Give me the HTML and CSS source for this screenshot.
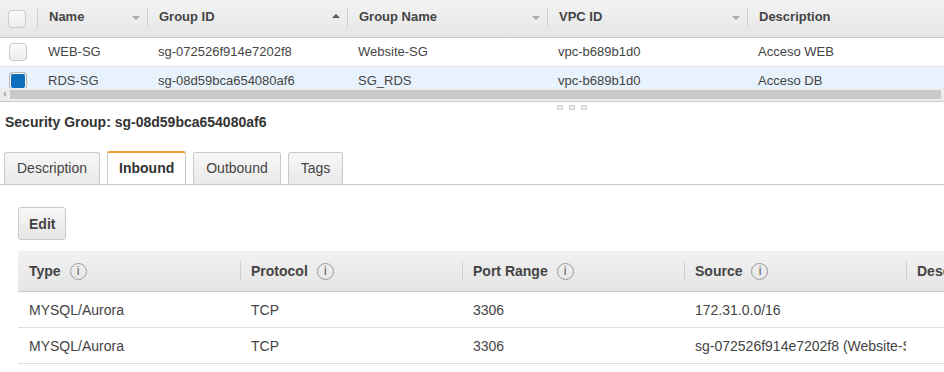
FILE: index.html
```html
<!DOCTYPE html>
<html lang="en">
<head>
    <meta charset="UTF-8">
    <title>Security Groups</title>
    <link rel="stylesheet" href="styles.css">
</head>
<body>
<div class="list-pane">
    <div class="list-body">
        <div class="grid-row grid-head">
            <div class="cell check-cell"><span class="check"></span></div>
            <div class="cell">Name<span class="sort down"></span></div>
            <div class="cell">Group ID<span class="sort up"></span></div>
            <div class="cell">Group Name<span class="sort down"></span></div>
            <div class="cell">VPC ID<span class="sort down"></span></div>
            <div class="cell last">Description</div>
        </div>
        <div class="grid-row">
            <div class="cell check-cell"><span class="check"></span></div>
            <div class="cell">WEB-SG</div>
            <div class="cell">sg-072526f914e7202f8</div>
            <div class="cell">Website-SG</div>
            <div class="cell">vpc-b689b1d0</div>
            <div class="cell last">Acceso WEB</div>
        </div>
        <div class="grid-row selected">
            <div class="cell check-cell"><span class="check on"></span></div>
            <div class="cell">RDS-SG</div>
            <div class="cell">sg-08d59bca654080af6</div>
            <div class="cell">SG_RDS</div>
            <div class="cell">vpc-b689b1d0</div>
            <div class="cell last">Acceso DB</div>
        </div>
        <div class="grid-row">
            <div class="cell check-cell"><span class="check"></span></div>
        </div>
    </div>
    <div class="hscroll">
        <span class="arrow-left"></span>
        <div class="thumb"></div>
    </div>
</div>
<div class="splitter"><span></span><span></span><span></span></div>

<div class="detail">
    <h2 class="detail-title">Security Group: sg-08d59bca654080af6</h2>
    <div class="tabs">
        <div class="tab">Description</div>
        <div class="tab active">Inbound</div>
        <div class="tab">Outbound</div>
        <div class="tab">Tags</div>
    </div>
    <div class="tab-panel">
        <button class="btn">Edit</button>
        <div class="rules">
            <div class="rule-row rule-head">
                <div class="rcell">Type <span class="info">i</span></div>
                <div class="rcell">Protocol <span class="info">i</span></div>
                <div class="rcell">Port Range <span class="info">i</span></div>
                <div class="rcell">Source <span class="info">i</span></div>
                <div class="rcell">Description <span class="info">i</span></div>
            </div>
            <div class="rule-row">
                <div class="rcell">MYSQL/Aurora</div>
                <div class="rcell">TCP</div>
                <div class="rcell">3306</div>
                <div class="rcell">172.31.0.0/16</div>
                <div class="rcell"></div>
            </div>
            <div class="rule-row">
                <div class="rcell">MYSQL/Aurora</div>
                <div class="rcell">TCP</div>
                <div class="rcell">3306</div>
                <div class="rcell">sg-072526f914e7202f8 (Website-SG)</div>
                <div class="rcell"></div>
            </div>
        </div>
    </div>
</div>
</body>
</html>
```

FILE: styles.css
```css
body {
    margin: 0;
    width: 944px;
    height: 372px;
    overflow: hidden;
    font-family: "Liberation Sans", Arial, sans-serif;
    color: #444;
    background-color: #fff;
}
.list-pane {
    border-bottom: 1px solid #ccc;
}
.list-body {
    height: 88px;
    overflow: hidden;
}
.grid-row {
    display: grid;
    grid-template-columns: 38px 110px 200px 200px 200px 1fr;
    height: 28px;
    border-bottom: 1px solid #e2e2e2;
    font-size: 13px;
    align-items: center;
}
.grid-row.selected {
    background-color: #e8f2fc;
}
.grid-head {
    height: 37px;
    background: linear-gradient(#f3f3f3, #e6e6e6);
    border-bottom: 1px solid #c9c9c9;
    font-weight: bold;
}
.cell {
    position: relative;
    padding-left: 10px;
    line-height: 18px;
    white-space: nowrap;
    overflow: hidden;
}
.grid-head .cell {
    height: 37px;
    line-height: 34px;
    padding-left: 11px;
}
.grid-head .cell::after {
    content: "";
    position: absolute;
    right: 0;
    top: 8px;
    height: 20px;
    border-right: 1px solid #d0d0d0;
}
.grid-head .cell.last::after {
    display: none;
}
.check-cell {
    padding-left: 8px;
}
.grid-head .check-cell {
    padding-left: 8px;
    display: flex;
    align-items: center;
}
.check {
    display: block;
    width: 16px;
    height: 16px;
    border: 1px solid #c9c9c9;
    border-radius: 4px;
    background: linear-gradient(#fafafa, #ececec);
}
.grid-row .check-cell .check {
    margin-left: 1px;
}
.grid-head .check-cell .check {
    margin-left: 0;
}
.check.on {
    background: #0a6ebd;
    box-shadow: inset 0 0 0 1px #fff;
    border-color: #b8b8b8;
}
.sort {
    position: absolute;
    right: 8px;
    top: 16px;
    width: 0;
    height: 0;
    border-left: 4px solid transparent;
    border-right: 4px solid transparent;
}
.sort.down {
    border-top: 4px solid #aaa;
}
.sort.up {
    top: 14px;
    border-bottom: 4px solid #555;
}
.hscroll {
    position: relative;
    height: 13px;
    background-color: #ececec;
    padding: 2px 3px 0 10px;
    box-sizing: border-box;
}
.thumb {
    height: 9px;
    background-color: #c9c9c9;
}
.arrow-left {
    position: absolute;
    left: 3px;
    top: 3px;
    border-top: 3px solid transparent;
    border-bottom: 3px solid transparent;
    border-right: 3px solid #b0b0b0;
}
.splitter {
    display: flex;
    justify-content: center;
    gap: 6px;
    padding: 3px 0 0 200px;
    height: 4px;
}
.splitter span {
    width: 4px;
    height: 3px;
    border: 1px solid #ccc;
    border-radius: 1px;
    background-color: #eee;
}
.detail-title {
    margin: 5px 0 0 5px;
    font-size: 14px;
    font-weight: bold;
    color: #333;
}
.tabs {
    display: flex;
    gap: 7px;
    margin-top: 22px;
    padding-left: 4px;
    border-bottom: 1px solid #c9c9c9;
    height: 32px;
}
.tab {
    padding: 0 12px;
    height: 31px;
    line-height: 31px;
    font-size: 14px;
    color: #444;
    border: 1px solid #c9c9c9;
    border-bottom: none;
    border-radius: 3px 3px 0 0;
    background: linear-gradient(#f7f7f7, #e9e9e9);
}
.tab.active {
    height: 31px;
    border-top: 2px solid #f79a2d;
    background: #fff;
    font-weight: bold;
    color: #333;
    line-height: 31px;
    margin-top: -1px;
    padding: 0 11px;
}
.tab-panel {
    padding: 22px 0 0 18px;
}
.btn {
    display: block;
    height: 33px;
    padding: 0 10px;
    font-family: "Liberation Sans", Arial, sans-serif;
    font-size: 14px;
    font-weight: bold;
    color: #444;
    border: 1px solid #c9c9c9;
    border-radius: 3px;
    background: linear-gradient(#f7f7f7, #e6e6e6);
}
.rules {
    margin-top: 11px;
    width: 1000px;
}
.rule-row {
    display: grid;
    grid-template-columns: 222px 222px 222px 222px 1fr;
    height: 35px;
    border-bottom: 1px solid #ddd;
    align-items: center;
    font-size: 14px;
}
.rule-head {
    height: 40px;
    background: linear-gradient(#f2f2f2, #e5e5e5);
    border-bottom: 1px solid #c9c9c9;
    font-weight: bold;
    color: #444;
}
.rcell {
    position: relative;
    padding-left: 11px;
    white-space: nowrap;
    overflow: hidden;
}
.rule-head .rcell {
    display: flex;
    align-items: center;
    gap: 9px;
    height: 40px;
}
.rule-head .rcell::before {
    content: "";
    position: absolute;
    left: 0;
    top: 10px;
    height: 19px;
    border-left: 1px solid #d0d0d0;
}
.rule-head .rcell:first-child::before {
    display: none;
}
.info {
    display: inline-flex;
    justify-content: center;
    align-items: center;
    width: 15px;
    height: 15px;
    border: 1px solid #999;
    border-radius: 50%;
    font-size: 12px;
    font-weight: normal;
    color: #555;
    line-height: 1;
}
.rule-row .rcell:nth-child(4) {
    width: 211px;
}
```
